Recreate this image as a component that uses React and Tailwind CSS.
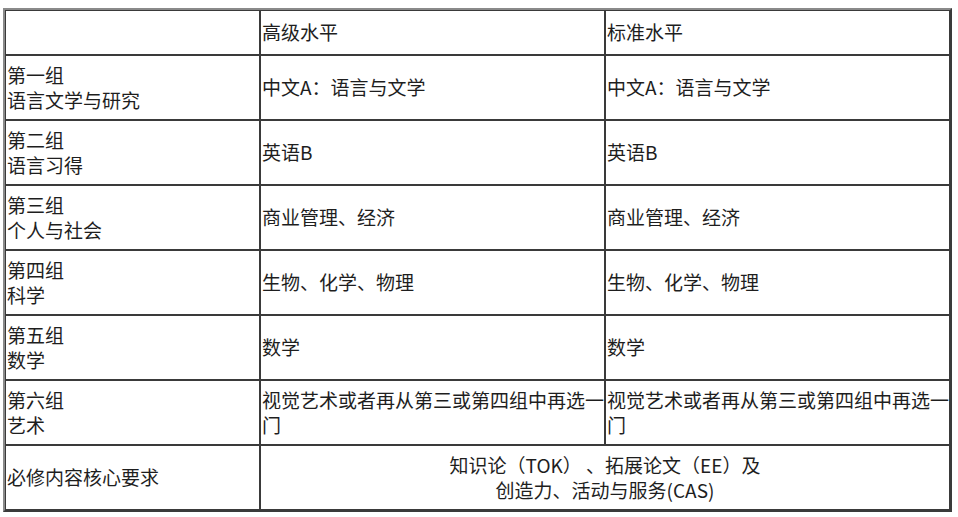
import React from 'react';

const rows = [
    { group: ['第一组', '语言文学与研究'], hl: '中文A：语言与文学', sl: '中文A：语言与文学' },
    { group: ['第二组', '语言习得'], hl: '英语B', sl: '英语B' },
    { group: ['第三组', '个人与社会'], hl: '商业管理、经济', sl: '商业管理、经济' },
    { group: ['第四组', '科学'], hl: '生物、化学、物理', sl: '生物、化学、物理' },
    { group: ['第五组', '数学'], hl: '数学', sl: '数学' },
    { group: ['第六组', '艺术'], hl: ['视觉艺术或者再从第三或第四组中再选一', '门'], sl: ['视觉艺术或者再从第三或第四组中再选一', '门'] },
];

const cell = "border border-[#3a3a3a] px-[1px] pb-[2px] align-middle text-left whitespace-nowrap";

const Lines = ({ value }) => {
    if (!Array.isArray(value)) return value;
    return value.map((line, i) => <div key={i}>{line}</div>);
};

export default function App() {
    return (
        <div className="bg-white w-[958px] h-[517px] pt-[8px] pl-[3px] font-['Noto_Sans_CJK_SC','Microsoft_YaHei',sans-serif] text-[19px] leading-[25px] text-[#1e1e1e]">
            <table className="table-fixed w-[949px] border-separate border-spacing-0 border-2 border-t-[#8a8a8a] border-l-[#8a8a8a] border-r-[#3a3a3a] border-b-[#3a3a3a]">
                <tbody>
                    {/* header */}
                    <tr className="h-[45px]">
                        <td className={`${cell} w-[255px]`}></td>
                        <td className={`${cell} w-[345px]`}>高级水平</td>
                        <td className={`${cell} w-[345px]`}>标准水平</td>
                    </tr>

                    {rows.map((r) => (
                        <tr key={r.group[0]} className="h-[65px]">
                            <td className={cell}><Lines value={r.group} /></td>
                            <td className={cell}><Lines value={r.hl} /></td>
                            <td className={cell}><Lines value={r.sl} /></td>
                        </tr>
                    ))}

                    {/* core */}
                    <tr className="h-[65px]">
                        <td className={cell}>必修内容核心要求</td>
                        <td colSpan={2} className="border border-[#3a3a3a] pb-[2px] align-middle text-center">
                            <div>知识论（TOK）&nbsp;、拓展论文（EE）及</div>
                            <div>创造力、活动与服务(CAS)</div>
                        </td>
                    </tr>
                </tbody>
            </table>
        </div>
    );
}
